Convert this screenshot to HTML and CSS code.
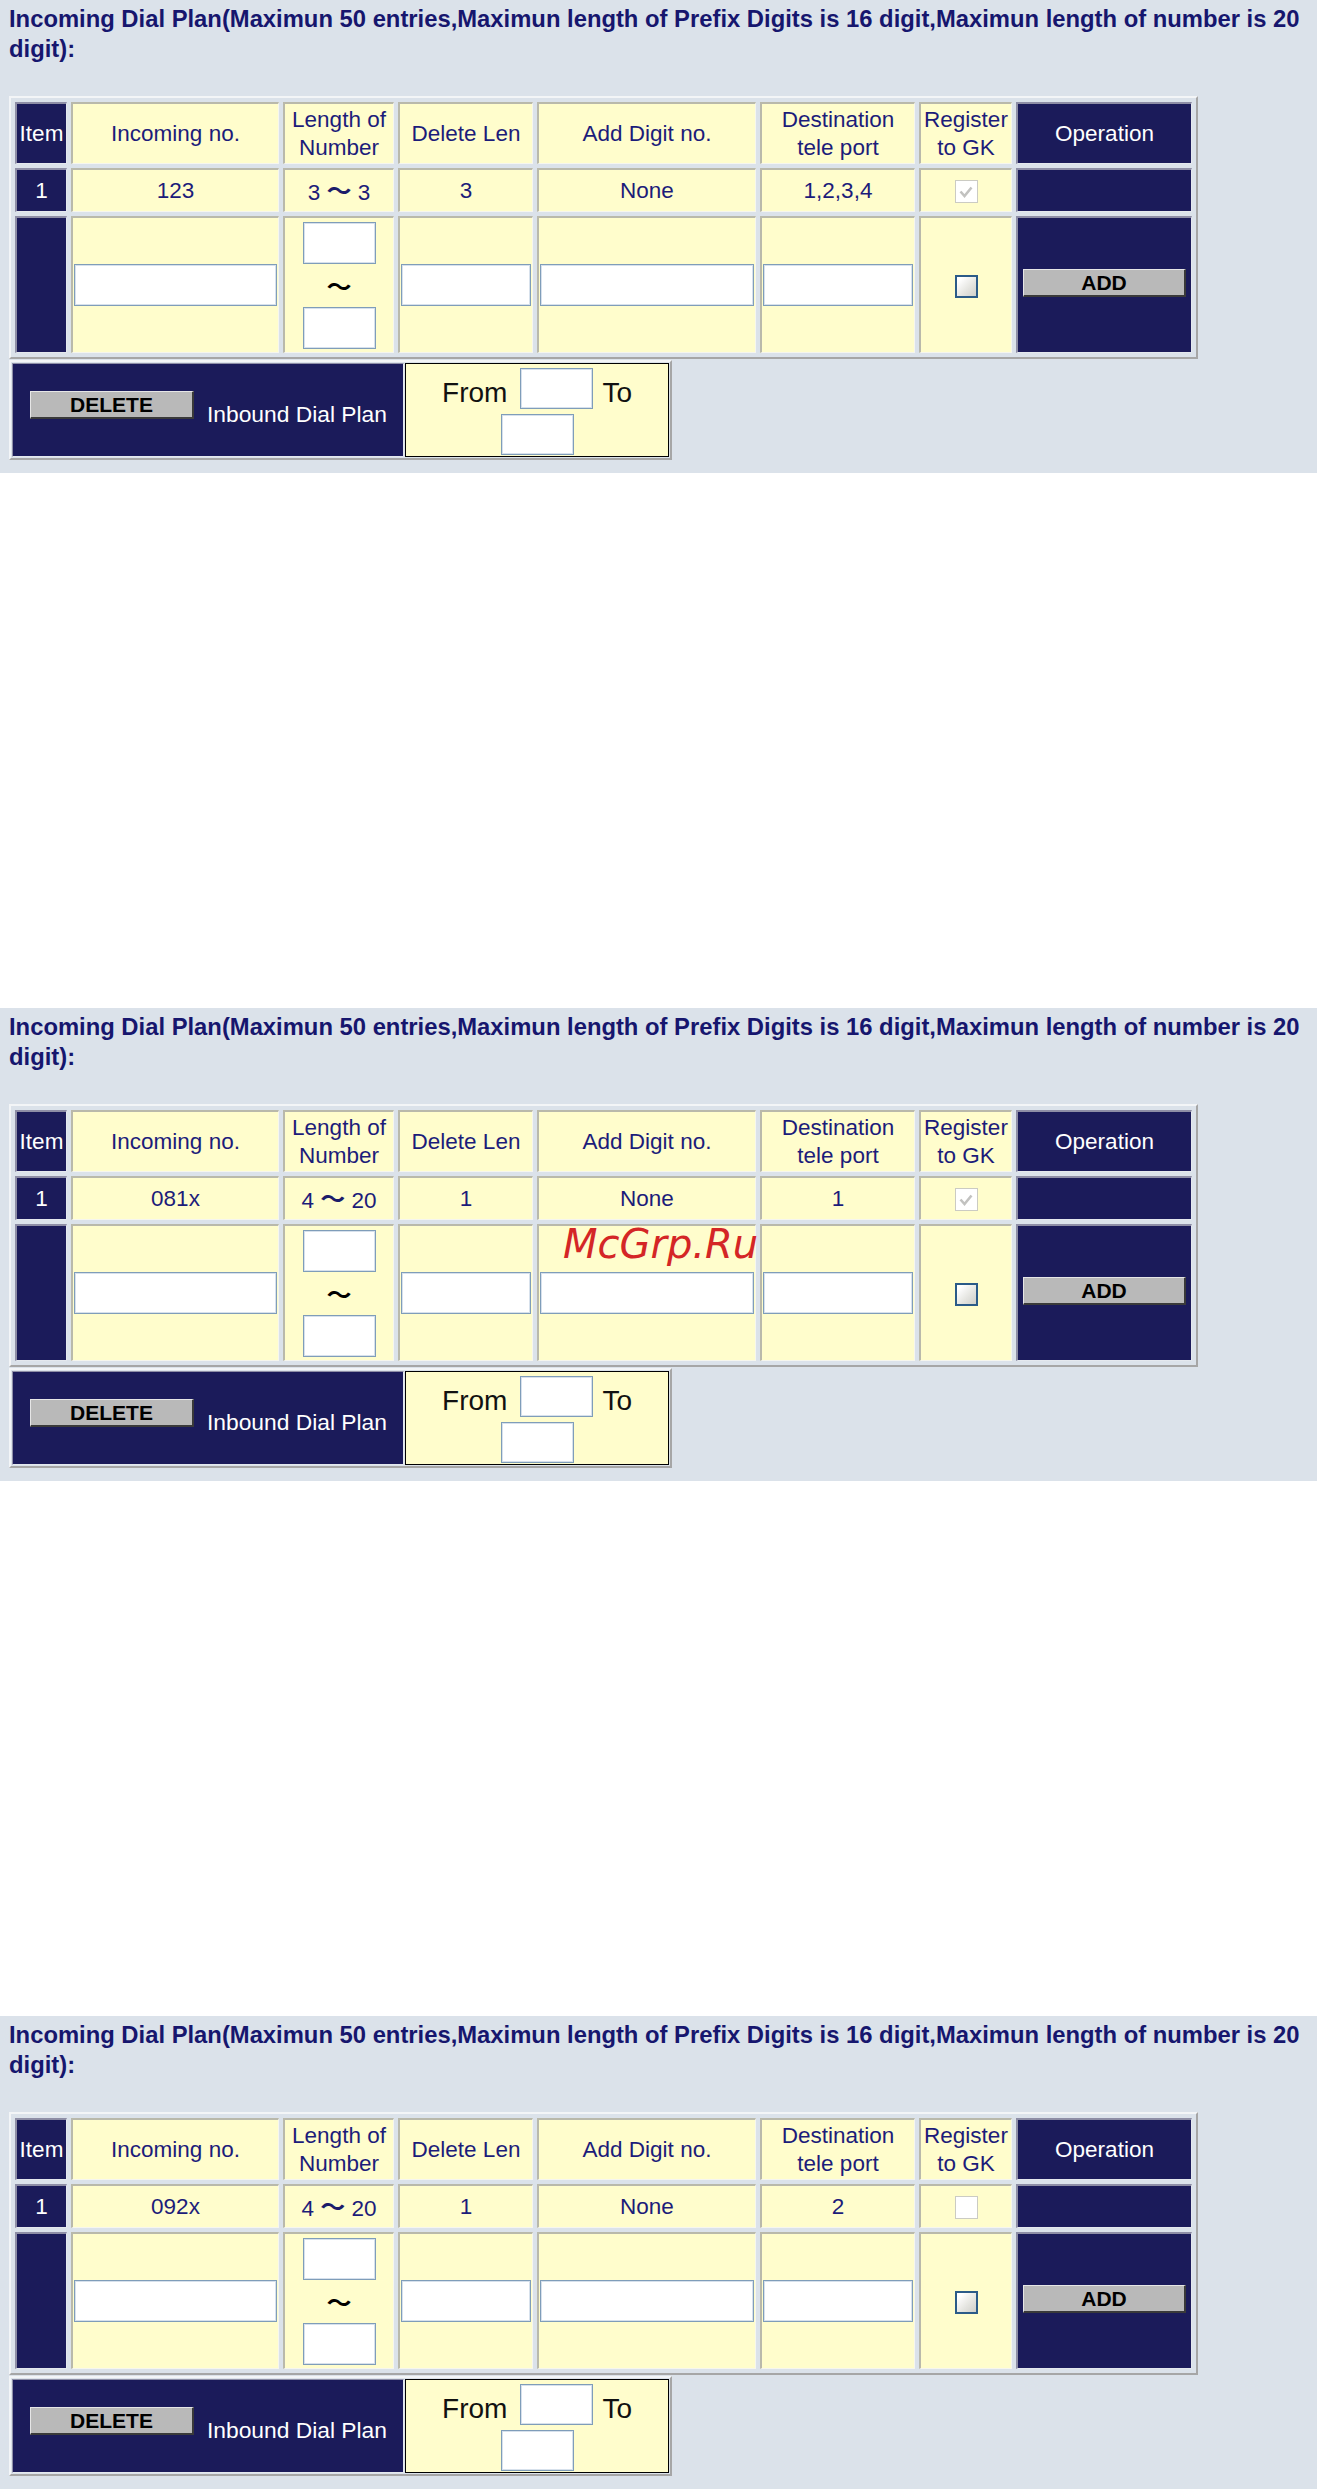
FILE: index.html
```
<!DOCTYPE html>
<html>
<head>
<meta charset="utf-8">
<title>Incoming Dial Plan</title>
<link rel="stylesheet" href="styles.css">
</head>
<body>

<div class="panel">
  <p class="title">Incoming Dial Plan(Maximun 50 entries,Maximun length of Prefix Digits is 16 digit,Maximun length of number is 20 digit):</p>
  <table class="plan">
    <tr class="head">
      <th class="dark w-item">Item</th>
      <th class="w-inc">Incoming no.</th>
      <th class="w-len">Length of<br>Number</th>
      <th class="w-del">Delete Len</th>
      <th class="w-add">Add Digit no.</th>
      <th class="w-dest">Destination<br>tele port</th>
      <th class="w-reg">Register<br>to GK</th>
      <th class="dark w-op">Operation</th>
    </tr>
    <tr class="entry">
      <td class="dark">1</td>
      <td>123</td>
      <td>3 <span class="wave">～</span> 3</td>
      <td>3</td>
      <td>None</td>
      <td>1,2,3,4</td>
      <td><span class="chk-off"><svg width="20" height="20" viewBox="0 0 20 20"><path d="M4.5 9.5 L8.5 14 L15.5 5.5" fill="none" stroke="#c2c2c0" stroke-width="2.6"/></svg></span></td>
      <td class="dark"></td>
    </tr>
    <tr class="new">
      <td class="dark"></td>
      <td><input class="field" type="text"></td>
      <td><div class="stack"><input class="short" type="text"><span class="wave-k">～</span><input class="short" type="text"></div></td>
      <td><input class="field" type="text"></td>
      <td><input class="field" type="text"></td>
      <td><input class="field" type="text"></td>
      <td><span class="chk"></span></td>
      <td class="dark"><button class="btn btn-add" type="button">ADD</button></td>
    </tr>
  </table>
  <table class="del">
    <tr>
      <td class="dark del-cell"><div class="del-wrap"><button class="btn btn-del" type="button">DELETE</button><span class="del-label">Inbound Dial Plan</span></div></td>
      <td class="range">
        <div class="range-line"><span class="range-word">From</span><input class="range-in range-first" type="text"><span class="range-word">To</span></div>
        <div class="range-line"><input class="range-in" type="text"></div>
      </td>
    </tr>
  </table>
</div>

<div class="panel">
  <p class="title">Incoming Dial Plan(Maximun 50 entries,Maximun length of Prefix Digits is 16 digit,Maximun length of number is 20 digit):</p>
  <table class="plan">
    <tr class="head">
      <th class="dark w-item">Item</th>
      <th class="w-inc">Incoming no.</th>
      <th class="w-len">Length of<br>Number</th>
      <th class="w-del">Delete Len</th>
      <th class="w-add">Add Digit no.</th>
      <th class="w-dest">Destination<br>tele port</th>
      <th class="w-reg">Register<br>to GK</th>
      <th class="dark w-op">Operation</th>
    </tr>
    <tr class="entry">
      <td class="dark">1</td>
      <td>081x</td>
      <td>4 <span class="wave">～</span> 20</td>
      <td>1</td>
      <td>None</td>
      <td>1</td>
      <td><span class="chk-off"><svg width="20" height="20" viewBox="0 0 20 20"><path d="M4.5 9.5 L8.5 14 L15.5 5.5" fill="none" stroke="#c2c2c0" stroke-width="2.6"/></svg></span></td>
      <td class="dark"></td>
    </tr>
    <tr class="new">
      <td class="dark"></td>
      <td><input class="field" type="text"></td>
      <td><div class="stack"><input class="short" type="text"><span class="wave-k">～</span><input class="short" type="text"></div></td>
      <td><input class="field" type="text"></td>
      <td><input class="field" type="text"></td>
      <td><input class="field" type="text"></td>
      <td><span class="chk"></span></td>
      <td class="dark"><button class="btn btn-add" type="button">ADD</button></td>
    </tr>
  </table>
  <table class="del">
    <tr>
      <td class="dark del-cell"><div class="del-wrap"><button class="btn btn-del" type="button">DELETE</button><span class="del-label">Inbound Dial Plan</span></div></td>
      <td class="range">
        <div class="range-line"><span class="range-word">From</span><input class="range-in range-first" type="text"><span class="range-word">To</span></div>
        <div class="range-line"><input class="range-in" type="text"></div>
      </td>
    </tr>
  </table>
  <div class="wm">McGrp.Ru</div>
</div>

<div class="panel">
  <p class="title">Incoming Dial Plan(Maximun 50 entries,Maximun length of Prefix Digits is 16 digit,Maximun length of number is 20 digit):</p>
  <table class="plan">
    <tr class="head">
      <th class="dark w-item">Item</th>
      <th class="w-inc">Incoming no.</th>
      <th class="w-len">Length of<br>Number</th>
      <th class="w-del">Delete Len</th>
      <th class="w-add">Add Digit no.</th>
      <th class="w-dest">Destination<br>tele port</th>
      <th class="w-reg">Register<br>to GK</th>
      <th class="dark w-op">Operation</th>
    </tr>
    <tr class="entry">
      <td class="dark">1</td>
      <td>092x</td>
      <td>4 <span class="wave">～</span> 20</td>
      <td>1</td>
      <td>None</td>
      <td>2</td>
      <td><span class="chk-off"></span></td>
      <td class="dark"></td>
    </tr>
    <tr class="new">
      <td class="dark"></td>
      <td><input class="field" type="text"></td>
      <td><div class="stack"><input class="short" type="text"><span class="wave-k">～</span><input class="short" type="text"></div></td>
      <td><input class="field" type="text"></td>
      <td><input class="field" type="text"></td>
      <td><input class="field" type="text"></td>
      <td><span class="chk"></span></td>
      <td class="dark"><button class="btn btn-add" type="button">ADD</button></td>
    </tr>
  </table>
  <table class="del">
    <tr>
      <td class="dark del-cell"><div class="del-wrap"><button class="btn btn-del" type="button">DELETE</button><span class="del-label">Inbound Dial Plan</span></div></td>
      <td class="range">
        <div class="range-line"><span class="range-word">From</span><input class="range-in range-first" type="text"><span class="range-word">To</span></div>
        <div class="range-line"><input class="range-in" type="text"></div>
      </td>
    </tr>
  </table>
</div>

</body>
</html>
```
FILE: styles.css
```
html, body {
  margin: 0;
  padding: 0;
  background: #ffffff;
}

.panel {
  position: relative;
  background: #dbe2ea;
  padding: 4px 0 13px 9px;
  height: 456px;
}

.panel + .panel {
  margin-top: 535px;
}

.title {
  margin: 0 0 32px;
  width: 1305px;
  font-family: "Liberation Sans", Arial, sans-serif;
  font-weight: bold;
  font-size: 23.8px;
  line-height: 30px;
  color: #16166e;
}

/* main dial plan table */
.plan {
  border-collapse: separate;
  border-spacing: 4px;
  border-style: solid;
  border-width: 2px;
  border-color: #f3f5f7 #a6a6a6 #a6a6a6 #f3f5f7;
  table-layout: fixed;
  width: 1189px;
}

.plan th,
.plan td {
  box-sizing: border-box;
  background: #fffdcc;
  border-style: solid;
  border-width: 2px 1px 1px 2px;
  border-color: #b9b9ab #f6f6ee #f6f6ee #b9b9ab;
  padding: 0 1px;
  text-align: center;
  vertical-align: middle;
  font-family: "Liberation Sans", Arial, sans-serif;
  font-weight: normal;
  font-size: 22.5px;
  line-height: 28px;
  color: #1c1c7a;
  white-space: nowrap;
}

.plan .dark,
.del .dark {
  background: #1b1b5a;
  color: #ffffff;
  border-color: #8e8ea6 #e4e8ee #e4e8ee #8e8ea6;
}

.w-item { width: 52px; }
.w-inc { width: 208px; }
.w-len { width: 111px; }
.w-del { width: 135px; }
.w-add { width: 219px; }
.w-dest { width: 155px; }
.w-reg { width: 93px; }
.w-op { width: 176px; }

.head { height: 62px; }
.entry { height: 44px; }
.new { height: 137px; }

.wave {
  font-family: "Noto Sans CJK JP", sans-serif;
  font-weight: bold;
  font-size: 25px;
  color: #1c1c6a;
}

.wave-k {
  display: block;
  height: 43px;
  line-height: 43px;
  font-family: "Noto Sans CJK JP", sans-serif;
  font-weight: bold;
  font-size: 25px;
  color: #000000;
}

.field,
.short,
.range-in {
  box-sizing: border-box;
  display: block;
  margin: 0;
  padding: 0;
  height: 42px;
  background: #ffffff;
  border: 1px solid #7f9db9;
  box-shadow: inset 0 0 0 1px #d7e1ec;
  font-size: 20px;
}

.field {
  width: 100%;
}

.stack {
  display: flex;
  flex-direction: column;
  align-items: center;
}

.short {
  width: 73px;
}

/* checkboxes */
.chk,
.chk-off {
  box-sizing: border-box;
  display: inline-flex;
  align-items: center;
  justify-content: center;
  width: 23px;
  height: 23px;
  vertical-align: middle;
}

.chk {
  border: 2px solid #2b5b88;
  background: linear-gradient(135deg, #ffffff 15%, #e4e4e0 60%, #cfcfca 100%);
}

.chk-off {
  border: 1.5px solid #cbcbc3;
  background: #ffffff;
}

.chk-off svg {
  display: block;
}

/* buttons */
.btn {
  box-sizing: border-box;
  height: 28px;
  padding: 0;
  margin: 0;
  background: #b9b9b9;
  border-style: solid;
  border-width: 1px 2px 2px 1px;
  border-color: #e6e6e6 #3a3a3a #3a3a3a #e6e6e6;
  font-family: "Liberation Sans", Arial, sans-serif;
  font-weight: bold;
  font-size: 21px;
  line-height: 24px;
  color: #000000;
}

.btn-add {
  width: 163px;
  margin-bottom: 4px;
}

.btn-del {
  width: 164px;
  flex: none;
  margin-top: 27px;
}

/* delete table */
.del {
  margin-top: 1px;
  border-collapse: separate;
  border-spacing: 1px;
  border-style: solid;
  border-width: 2px;
  border-color: #f3f5f7 #a6a6a6 #a6a6a6 #f3f5f7;
  table-layout: fixed;
  width: 663px;
}

.del td {
  box-sizing: border-box;
  height: 94px;
  border: 1px solid;
  padding: 0;
}

.del-cell {
  width: 392px;
  vertical-align: top;
}

.del-wrap {
  display: flex;
  align-items: flex-start;
  padding-left: 17px;
}

.del-label {
  margin: 36px 0 0 13px;
  font-family: "Liberation Sans", Arial, sans-serif;
  font-size: 22.8px;
  line-height: 28px;
  color: #ffffff;
  white-space: nowrap;
}

.range {
  background: #fffdcc;
  border-color: #f6f6ee #d6d6c8 #d6d6c8 #f6f6ee;
  vertical-align: top;
  padding-top: 3px !important;
}

.range-line {
  display: flex;
  justify-content: center;
  align-items: center;
}

.range-line + .range-line {
  margin-top: 5px;
}

.range-word {
  padding-top: 10px;
  font-family: "Liberation Sans", Arial, sans-serif;
  font-size: 28px;
  line-height: 32px;
  color: #111111;
}

.range-in {
  width: 73px;
  height: 41px;
}

.range-first {
  margin: 0 9px 0 13px;
}

/* watermark over the second panel */
.wm {
  position: absolute;
  left: 563px;
  top: 216px;
  font-family: "DejaVu Sans", sans-serif;
  font-style: oblique;
  font-size: 40px;
  line-height: 1;
  color: #d42626;
}
```
